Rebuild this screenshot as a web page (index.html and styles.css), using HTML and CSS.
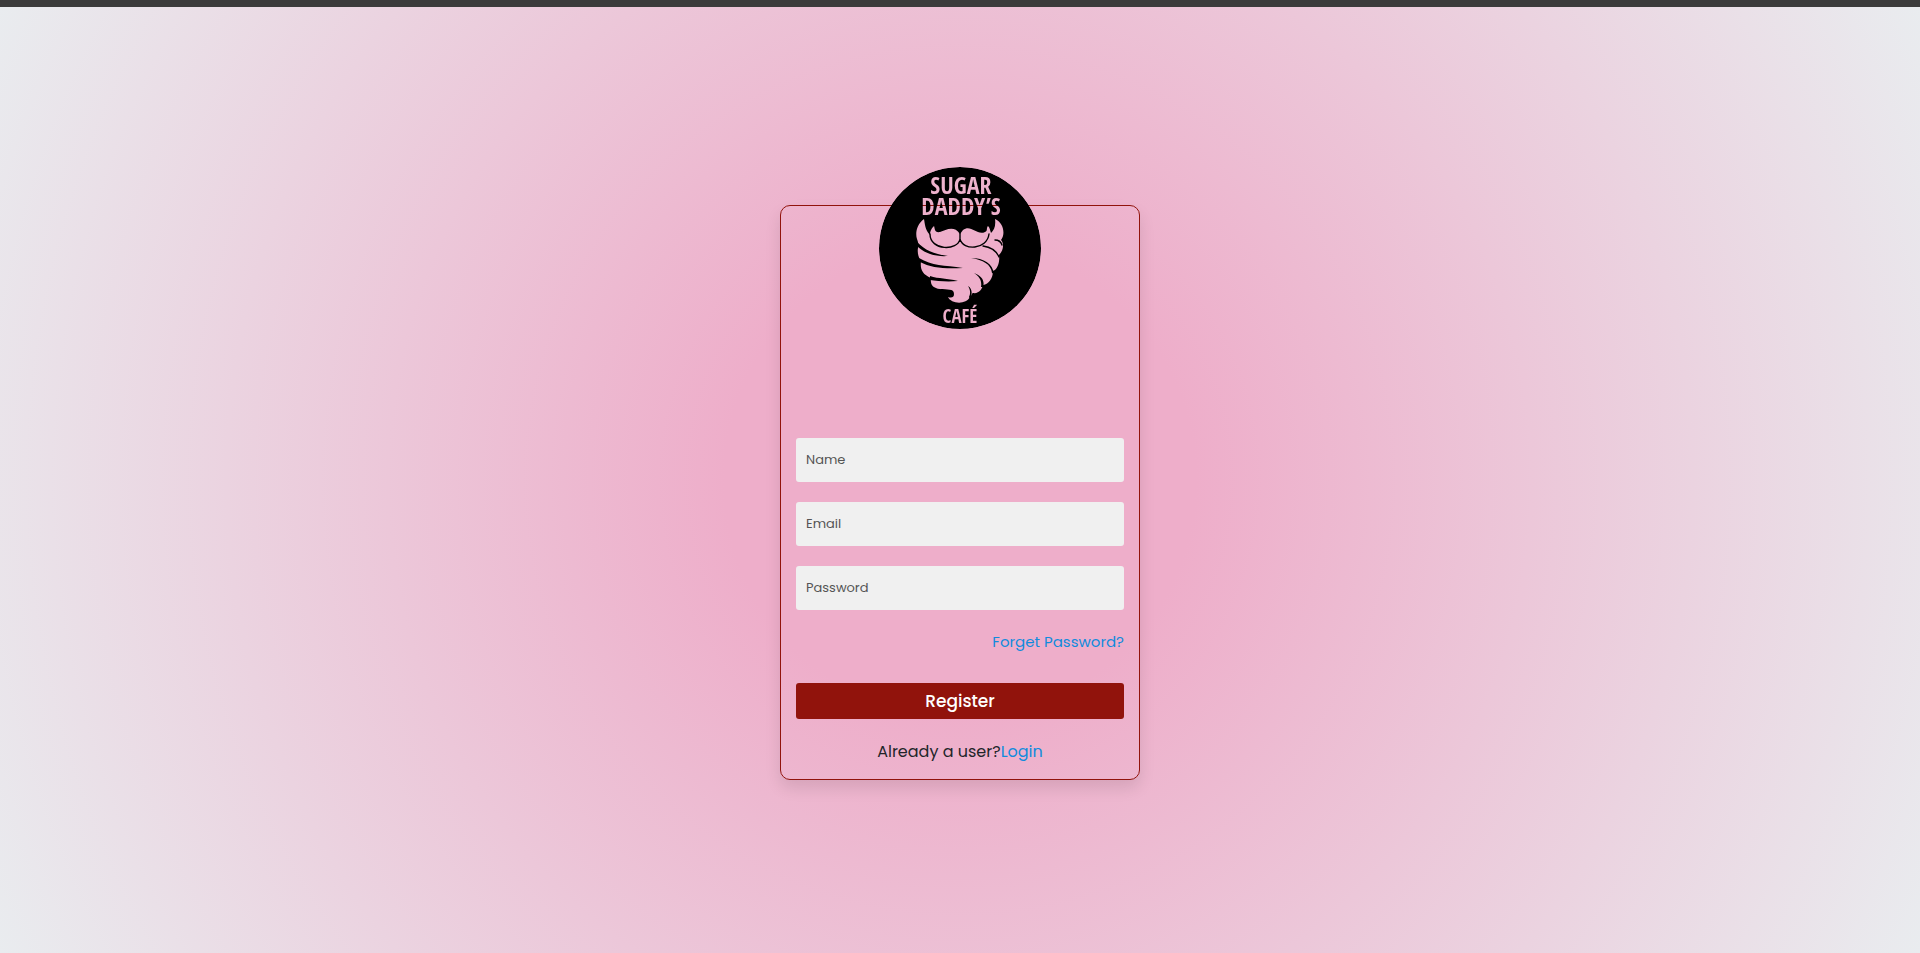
FILE: index.html
```html
<!DOCTYPE html>
<html lang="en">
<head>
<meta charset="utf-8">
<title>Sugar Daddy's Café – Register</title>
<link rel="stylesheet" href="styles.css">
</head>
<body>
<header class="topbar"></header>
<main class="page">
  <form class="card">
    <svg class="logo" viewBox="0 0 162 162" role="img" aria-label="Sugar Daddy's Café">
      <mask id="cut" maskUnits="userSpaceOnUse" x="0" y="0" width="162" height="162">
        <circle cx="81" cy="81" r="81" fill="#fff"/>
        <g class="logo-text" fill="#000" text-anchor="middle">
          <text x="82" y="27" font-size="24">SUGAR</text>
          <text x="82" y="48" font-size="24">DADDY’S</text>
          <text x="81" y="156" font-size="19">CAFÉ</text>
        </g>
        <path fill="#000" d="M45 52C38 57 36 66 38 72C39 75 40 77 39 81C38 87 40 91 42 94C41 102 43 107 52 111C51 118 54 121 61 122C68 123 75 121 75 127C75 131 72 131 69 130C72 137 87 138 91 130C93 128 93 126 94 126C100 127 103 122 104 118C110 117 114 111 114 104C119 102 121 94 120 88C125 83 125 76 122 73C127 67 124 55 116 52C117 59 115 63 112 66C111 63 111 61 109 59C107 61 109 64 106 65C98 69 92 57 84 63L81 67C75 58 67 63 61 65C55 66 56 61 55 59C52 62 51 64 51 68C46 63 46 57 45 52Z"/>
        <g fill="none" stroke="#fff" stroke-width="1.4" stroke-linecap="round">
          <path d="M51 67C51 84 79 84 81 72C84 84 108 83 110 67M81 63V73"/>
          <path d="M104 79C111 80 117 83 120 90M116 73C120 73 122 75 123 78"/>
        </g>
        <path fill="#fff" d="M38 75C46 83 54 87 69 89C56 90 45 86 38 79ZM40 91C53 99 65 98 84 101C66 102 52 101 41 95ZM51 109C60 112 68 111 79 114C68 115 58 114 51 113ZM92 91C105 91 114 97 115 107L113 106C112 97 104 93 92 91ZM95 106C103 109 106 114 104 120L102 120C103 114 101 110 95 106ZM89 119C94 122 93 128 91 132L90 130C92 126 91 122 89 119Z"/>
      </mask>
      <circle cx="81" cy="81" r="81" mask="url(#cut)"/>
    </svg>
    <div class="fields">
      <input class="field" type="text" placeholder="Name" aria-label="Name">
      <input class="field" type="email" placeholder="Email" aria-label="Email">
      <input class="field" type="password" placeholder="Password" aria-label="Password">
    </div>
    <a class="link forgot" href="#forgot">Forget Password?</a>
    <button class="submit" type="submit">Register</button>
    <p class="switch">Already a user?<a class="link" href="#login">Login</a></p>
  </form>
</main>
</body>
</html>
```
FILE: styles.css
```css
* { box-sizing: border-box; }
body {
  margin: 0;
  min-height: 100vh;
  display: flex;
  flex-direction: column;
  font-family: Poppins, Inter, "Open Sans", sans-serif;
  font-size: 16px;
  line-height: 24px;
  color: #212529;
}
.topbar { height: 7px; background: #3b3b3b; }
.page {
  flex: 1;
  display: flex;
  align-items: center;
  justify-content: center;
  padding: 24px 16px 0;
  background: radial-gradient(circle, #eeaeca 22%, #e9ecef 100%);
}
.card {
  display: flex;
  flex-direction: column;
  width: 100%;
  max-width: 360px;
  padding: 0 15px 15px;
  border: 1px solid #91130c;
  border-radius: 10px;
  box-shadow: 0 8px 16px rgba(0, 0, 0, 0.1);
}
.logo {
  width: 162px;
  height: 162px;
  margin: -39px auto 109px;
}
.logo-text {
  font-family: "Open Sans Condensed", "Liberation Sans Narrow", "Roboto Condensed", "Liberation Sans", sans-serif;
  font-weight: 700;
}
.fields { display: grid; gap: 20px; }
.field {
  width: 100%;
  height: 44px;
  padding: 0 10px;
  border: 0;
  border-radius: 3px;
  background: #f0f0f0;
  font: inherit;
  font-size: 13px;
  color: #212529;
}
.field::placeholder { color: #555; opacity: 1; }
.link { color: #118bdd; text-decoration: none; }
.forgot { align-self: flex-end; margin: 20px 0 29px; font-size: 15px; }
.submit {
  height: 36px;
  border: 0;
  border-radius: 3px;
  background: #91130c;
  color: #fff;
  font: inherit;
  font-size: 17px;
  font-weight: 500;
}
.switch { margin: 21px 0 0; text-align: center; }
```
